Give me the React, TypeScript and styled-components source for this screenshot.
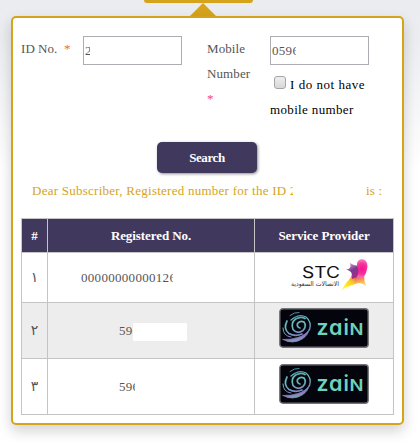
import React from "react";
import styled, { createGlobalStyle } from "styled-components";

const Global = createGlobalStyle`
  * { box-sizing: border-box; }
  body { margin: 0; background: #fff; }
`;

const gold = "#d6a31c";
const purple = "#40385d";

const Page = styled.main`
  width: 420px;
  height: 444px;
  overflow: hidden;
  background: linear-gradient(#ebecf0 0, #ecedf1 40px, #fff 170px);
  font: 13px/25px "Liberation Serif", "Times New Roman", serif;
  color: #555;
`;

const Tab = styled.div`
  width: 109px;
  height: 3px;
  margin-left: 144px;
  background: ${gold};
  border-radius: 0 0 5px 5px;
`;

const Arrow = styled.div`
  width: 0;
  margin-left: 190px;
  border: 13px solid transparent;
  border-top: 0;
  border-bottom-color: ${gold};
`;

const Card = styled.section`
  width: 393px;
  height: 409px;
  margin-left: 11px;
  padding: 18px 8px 0;
  background: #fff;
  border: 2px solid ${gold};
  border-radius: 5px;
  box-shadow: 0 6px 14px rgba(0, 0, 0, 0.18);
`;

const Form = styled.form`
  display: grid;
  grid-template-columns: 62px 124px 63px 106px;
  height: 106px;
  align-items: start;
`;

const Label = styled.label<{ $spacing: number; $width?: number }>`
  width: ${(p) => (p.$width ? `${p.$width}px` : "auto")};
  letter-spacing: ${(p) => p.$spacing}px;
`;

const Required = styled.span<{ $color: string }>`
  color: ${(p) => p.$color};
`;

const Field = styled.div`
  width: 99px;
  height: 29px;
  padding: 0 1px 0 1px;
  border: 1px solid #abadb3;
  background: #fff;
  line-height: 28px;
  letter-spacing: 0.3px;
`;

/* Shows only the leading part of a masked value. */
const Clip = styled.span<{ $w: number }>`
  display: inline-block;
  width: ${(p) => p.$w}px;
  overflow: hidden;
  white-space: nowrap;
  vertical-align: top;
`;

const Option = styled.div<{ $indent?: boolean }>`
  display: flex;
  align-items: center;
  gap: 4px;
  height: 25px;
  padding-left: ${(p) => (p.$indent ? 4 : 0)}px;
  margin-top: ${(p) => (p.$indent ? 7 : 0)}px;
  color: #000;
  white-space: nowrap;
  letter-spacing: ${(p) => (p.$indent ? 0.53 : 0.35)}px;
`;

const Checkbox = styled.span`
  width: 12px;
  height: 13px;
  margin-bottom: 5px;
  border: 1px solid #a5a5a5;
  border-radius: 3px;
  background: linear-gradient(#eee, #d8d8d8);
`;

const Search = styled.button`
  display: block;
  width: 100px;
  height: 31px;
  margin-left: 136px;
  padding: 0;
  border: 0;
  border-radius: 5px;
  background: ${purple};
  box-shadow: 1px 1px 3px rgba(0, 0, 0, 0.45);
  color: #fff;
  font: bold 13px "Liberation Serif", serif;
  letter-spacing: -0.4px;
`;

const Message = styled.p`
  display: flex;
  height: 45px;
  margin: 0;
  padding: 5px 0 0 11px;
  color: ${gold};
  white-space: pre;
  letter-spacing: 0.25px;
`;

const MessageEnd = styled.span`
  margin-left: 73px;
`;

const Table = styled.div`
  display: grid;
  grid-template-columns: 25px 206px 138px;
  grid-template-rows: 33px 49px 55px 55px;
  gap: 1px;
  width: 373px;
  padding: 1px;
  background: #c4c4c4;
`;

const Cell = styled.div<{ $shade?: boolean }>`
  display: flex;
  align-items: center;
  justify-content: center;
  background: ${(p) => (p.$shade ? "#ededed" : "#fff")};
`;

const HeadCell = styled(Cell)`
  background: ${purple};
  color: #fff;
  font-weight: bold;
  letter-spacing: -0.08px;
`;

const NumberCell = styled(Cell)<{ $left: number }>`
  justify-content: flex-start;
  padding-left: ${(p) => p.$left}px;
  letter-spacing: 0.3px;
`;

const Digit = styled(Cell)`
  font-family: "DejaVu Sans", sans-serif;
  font-size: 14px;
`;

const LogoCell = styled(Cell)`
  padding: 0 0 5px 0;
`;

const Mask = styled.span`
  width: 54px;
  height: 18px;
  margin-top: 2px;
  background: #fff;
`;

const RoundLetter = styled.text`
  font-feature-settings: "cv11";
`;

const StcLogo = () => (
  <svg width="90" height="40" viewBox="279 255 90 40">
    <defs>
      <linearGradient id="stcTail" gradientUnits="userSpaceOnUse" x1="356" y1="273" x2="344" y2="290">
        <stop offset="0" stopColor="#c03080" />
        <stop offset="0.45" stopColor="#fbc52c" />
        <stop offset="0.75" stopColor="#ffee10" />
        <stop offset="1" stopColor="#fff58c" />
      </linearGradient>
      <radialGradient id="stcPink" gradientUnits="userSpaceOnUse" cx="362" cy="269" r="11">
        <stop offset="0" stopColor="#fa0f8c" />
        <stop offset="0.5" stopColor="#f4359c" />
        <stop offset="1" stopColor="#f5a0cd" />
      </radialGradient>
      <linearGradient id="stcPurple" gradientUnits="userSpaceOnUse" x1="350" y1="263" x2="357" y2="276">
        <stop offset="0" stopColor="#c79fce" />
        <stop offset="0.5" stopColor="#7c398f" />
        <stop offset="1" stopColor="#a52a86" />
      </linearGradient>
      <linearGradient id="stcFoot" gradientUnits="userSpaceOnUse" x1="361" y1="275" x2="364" y2="287">
        <stop offset="0" stopColor="#ef4a83" />
        <stop offset="0.5" stopColor="#f9b04c" />
        <stop offset="1" stopColor="#fff0b0" />
      </linearGradient>
    </defs>
    <text x="302" y="277.5" fontFamily="Inter, sans-serif" fontSize="15.5" fontWeight="400" fill="#111" textLength="38" lengthAdjust="spacingAndGlyphs">STC</text>
    <text x="315" y="285.5" textAnchor="middle" direction="rtl" fontFamily="DejaVu Sans, sans-serif" fontSize="6.5" fill="#333" textLength="48" lengthAdjust="spacingAndGlyphs">الاتصالات السعودية</text>
    <path d="M352 274L358 272L363 279Q358 284 352 285Q346 287 341 291Q345 284 348 281Q351 278 352 274Z" fill="url(#stcTail)" />
    <path d="M356 274L364 274Q364 281 366 286Q361 282 355 283Z" fill="url(#stcFoot)" />
    <path d="M350 263Q354 266 359 266L362 275L352 279Q353 275 351 272Q349 270 346 269.500Q352 269 350 263Z" fill="url(#stcPurple)" />
    <path d="M357 266Q356 260 362 259Q367.500 260 367.500 266Q367 273 363 278L357 277Q360 271 357 266Z" fill="url(#stcPink)" />
  </svg>
);

const ZainLogo = () => (
  <svg width="90" height="40" viewBox="0 0 90 40">
    <defs>
      <linearGradient id="zainSwirl" gradientUnits="userSpaceOnUse" x1="12" y1="5" x2="19" y2="35">
        <stop offset="0" stopColor="#4a87a5" />
        <stop offset="0.35" stopColor="#66c0b8" />
        <stop offset="0.6" stopColor="#6d9fbd" />
        <stop offset="0.82" stopColor="#8e79c0" />
        <stop offset="1" stopColor="#64c4b2" />
      </linearGradient>
    </defs>
    <rect x="0.8" y="0.8" width="88.4" height="38.4" rx="3" fill="#03040c" stroke="#737378" strokeWidth="1.4" />
    <g fill="none" stroke="url(#zainSwirl)" strokeLinecap="round">
      <path d="M11 7.500Q15 4 20 4.500" strokeWidth="1" />
      <path d="M12 12Q20 5 27 9Q33 14 30.500 22" strokeWidth="1.3" />
      <path d="M4 31.500Q14 37 24 30.500Q29 27 30.500 21Q27 27 19 29.500Q12 32 4 31.500" fill="url(#zainSwirl)" strokeWidth="0.8" />
      <path d="M8 13Q4 21 10 25.500Q16 29 23 26" strokeWidth="1.7" />
      <path d="M21 20Q17.500 19 18.500 15.500Q21 12 25 14Q28 18 24 22.500Q18 26.500 14 21.500Q11.500 15 16.500 11Q22 8 26 10.500" strokeWidth="1.7" />
      <path d="M4 20Q4 28 12 29" strokeWidth="1" />
    </g>
    <g fontFamily="Inter, sans-serif" fontSize="20.5" fontWeight="600" fill="#6ed2bc">
      <text x="37.500" y="27" textLength="12" lengthAdjust="spacingAndGlyphs">z</text>
      <RoundLetter x="50" y="27" textLength="13.500" lengthAdjust="spacingAndGlyphs">a</RoundLetter>
      <text x="64.500" y="27">i</text>
      <text x="70.500" y="27" fontSize="15.5" textLength="14" lengthAdjust="spacingAndGlyphs">N</text>
    </g>
  </svg>
);

export default function App() {
  return (
    <>
      <Global />
      <Page>
        <Tab />
        <Arrow />
        <Card>
          <Form>
            <Label $spacing={0.05}>ID No. <Required $color="#f06a4d">&nbsp;*</Required></Label>
            <Field><Clip $w={5}>2</Clip></Field>
            <Label $spacing={0.1} $width={48}>Mobile Number <Required $color="#f5486b">*</Required></Label>
            <div>
              <Field><Clip $w={24}>0596</Clip></Field>
              <Option $indent><Checkbox />I do not have</Option>
              <Option>mobile number</Option>
            </div>
          </Form>
          <Search type="button">Search</Search>
          <Message>
            <span>Dear Subscriber, Registered number for the ID </span>
            <Clip $w={3}>2</Clip>
            <MessageEnd>is :</MessageEnd>
          </Message>
          <Table>
            <HeadCell>#</HeadCell>
            <HeadCell>Registered No.</HeadCell>
            <HeadCell>Service Provider</HeadCell>
            <Digit>١</Digit>
            <NumberCell $left={33}><Clip $w={92}>00000000000126</Clip></NumberCell>
            <LogoCell><StcLogo /></LogoCell>
            <Digit $shade>٢</Digit>
            <NumberCell $left={71} $shade>59<Mask /></NumberCell>
            <LogoCell $shade><ZainLogo /></LogoCell>
            <Digit>٣</Digit>
            <NumberCell $left={71}><Clip $w={16}>596</Clip></NumberCell>
            <LogoCell><ZainLogo /></LogoCell>
          </Table>
        </Card>
      </Page>
    </>
  );
}
